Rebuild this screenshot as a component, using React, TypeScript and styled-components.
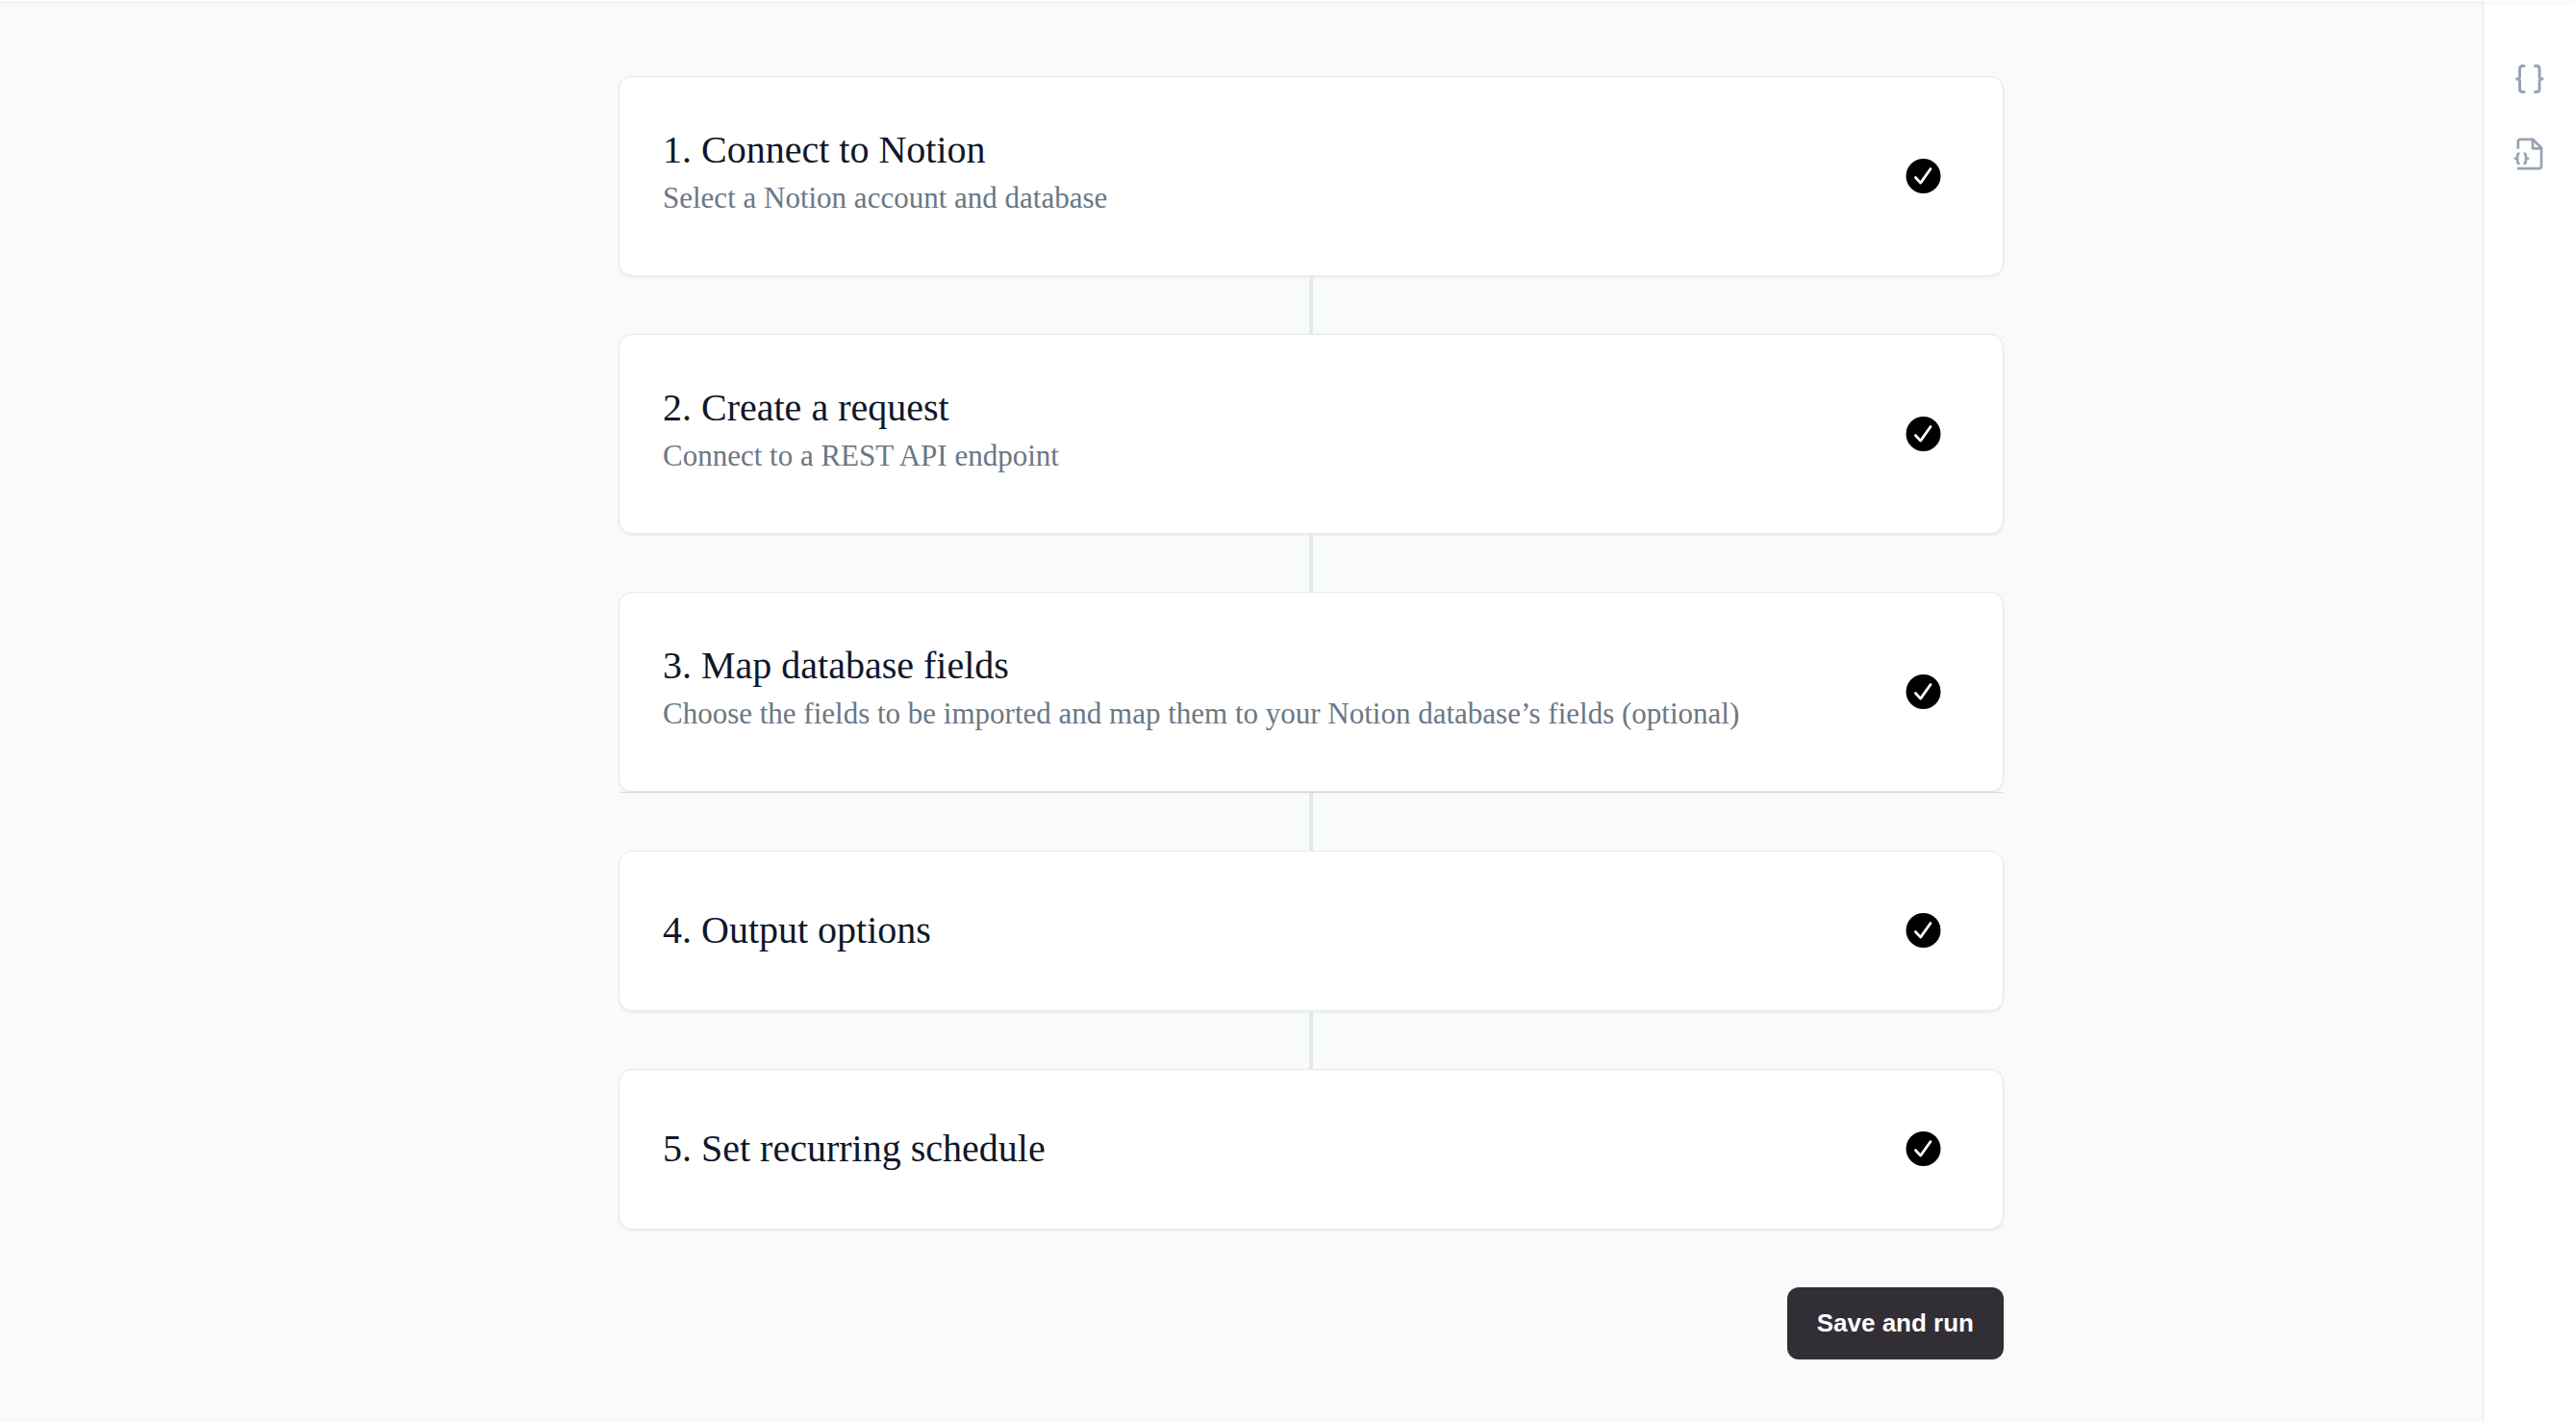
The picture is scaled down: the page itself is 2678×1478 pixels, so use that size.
import React from "react";
import styled, { createGlobalStyle } from "styled-components";

const GlobalStyle = createGlobalStyle`
  *, *::before, *::after { box-sizing: border-box; }
  body {
    margin: 0;
    background: #f9fbfa;
    color: #0f172a;
    font-family: "Liberation Serif", "Times New Roman", serif;
  }
`;

const Page = styled.div`
  display: flex;
  min-height: 100vh;
  border-top: 1px solid #ffffff;
  box-shadow: inset 0 8px 8px -8px rgba(15, 23, 42, 0.06);
`;

const Content = styled.main`
  flex: 1;
  min-width: 0;
  padding: 78px 0 64px 145px;
`;

const Column = styled.div`
  width: 100%;
  max-width: 1440px;
  margin: 0 auto;
  display: flex;
  flex-direction: column;
`;

const StepList = styled.ol`
  list-style: none;
  margin: 0;
  padding: 0;
`;

const Step = styled.li`
  & + &::before {
    content: "";
    display: block;
    width: 4px;
    height: 60px;
    margin: 0 auto;
    background: #e2e8f0;
  }
`;

const Card = styled.section<{ $compact: boolean }>`
  display: flex;
  align-items: center;
  justify-content: space-between;
  min-height: ${(p) => (p.$compact ? 167 : 208)}px;
  padding: 0 64px 0 45px;
  background: #ffffff;
  border: 1px solid #e2e8f0;
  border-radius: 14px;
  box-shadow: 0 2px 3px rgba(15, 23, 42, 0.05);
`;

const Divided = styled.div<{ $line: boolean }>`
  border-bottom: ${(p) => (p.$line ? "1px solid #dbe2ea" : "0")};
`;

const Heading = styled.div<{ $compact: boolean }>`
  padding-bottom: ${(p) => (p.$compact ? 2 : 10)}px;
`;

const Title = styled.h2`
  margin: 0;
  font-size: 40px;
  line-height: 56px;
  font-weight: 400;
`;

const Subtitle = styled.p`
  margin: 0;
  font-size: 31px;
  line-height: 44px;
  color: #6b7785;
`;

const Badge = styled.svg`
  display: block;
  flex: none;
  width: 37px;
  height: 37px;
`;

const Actions = styled.div`
  display: flex;
  justify-content: flex-end;
  margin-top: 60px;
`;

const PrimaryButton = styled.button`
  height: 75px;
  padding: 0 31px 2px;
  border: 0;
  border-radius: 12px;
  background: #322e36;
  color: #ffffff;
  font: 700 26px/36px "Liberation Sans", Arial, sans-serif;
  cursor: pointer;
`;

const Rail = styled.aside`
  flex: none;
  width: 97px;
  display: flex;
  flex-direction: column;
  align-items: center;
  gap: 42px;
  padding-top: 63px;
  background: #ffffff;
  border-left: 1px solid #e2e8f0;
  box-shadow: inset 0 8px 8px -8px rgba(15, 23, 42, 0.06);
`;

const RailButton = styled.button`
  display: block;
  width: 36px;
  height: 36px;
  padding: 0;
  border: 0;
  background: none;
  color: #98a4b3;
  cursor: pointer;

  svg { display: block; }
`;

const steps = [
  { title: "1. Connect to Notion", subtitle: "Select a Notion account and database" },
  { title: "2. Create a request", subtitle: "Connect to a REST API endpoint" },
  {
    title: "3. Map database fields",
    subtitle: "Choose the fields to be imported and map them to your Notion database’s fields (optional)",
    divided: true,
  },
  { title: "4. Output options" },
  { title: "5. Set recurring schedule" },
];

const CheckBadge = () => (
  <Badge viewBox="0 0 37 37" role="img" aria-label="Completed">
    <circle cx="18.5" cy="18" r="18" fill="#000" />
    <path d="M10.4 19.500l5.2 5.600L26 10.500" fill="none" stroke="#fff" strokeWidth="2.700" strokeLinecap="round" strokeLinejoin="round" />
  </Badge>
);

const BracesIcon = () => (
  <svg width="36" height="36" viewBox="0 0 36 36" fill="none" stroke="currentColor" strokeWidth="3" strokeLinecap="round" strokeLinejoin="round">
    <path d="M12 4.500h-1.500q-3 0-3 3v8q0 2.500-3 2.500q3 0 3 2.500v8q0 3 3 3H12" />
    <path d="M23.500 4.500h1.500q3 0 3 3v8q0 2.500 3 2.500q-3 0-3 2.500v8q0 3-3 3h-1.500" />
  </svg>
);

const FileBracesIcon = () => (
  <svg width="36" height="36" viewBox="0 0 36 36" fill="none" stroke="currentColor" strokeWidth="2.700" strokeLinejoin="round">
    <path d="M5.800 12.800V5.500q0-2.700 2.700-2.700H21l9 9V30.500q0 2.700-2.700 2.700H5" />
    <path d="M21 2.800v9.500h9" />
    <path d="M7.500 17.500q-2.300 0-2.300 2v1.500q0 1.700-2.200 1.700q2.200 0 2.200 1.700v1.500q0 2 2.300 2" />
    <path d="M11.500 17.500q2.300 0 2.300 2v1.500q0 1.700 2.200 1.700q-2.200 0-2.200 1.700v1.500q0 2-2.300 2" />
  </svg>
);

export default function App() {
  return (
    <>
      <GlobalStyle />
      <Page>
        <Content>
          <Column>
            <StepList>
              {steps.map((step) => (
                <Step key={step.title}>
                  <Divided $line={!!step.divided}>
                    <Card $compact={!step.subtitle}>
                      <Heading $compact={!step.subtitle}>
                        <Title>{step.title}</Title>
                        {step.subtitle && <Subtitle>{step.subtitle}</Subtitle>}
                      </Heading>
                      <CheckBadge />
                    </Card>
                  </Divided>
                </Step>
              ))}
            </StepList>
            <Actions>
              <PrimaryButton type="button">Save and run</PrimaryButton>
            </Actions>
          </Column>
        </Content>
        <Rail>
          <RailButton type="button" aria-label="View JSON"><BracesIcon /></RailButton>
          <RailButton type="button" aria-label="View response file"><FileBracesIcon /></RailButton>
        </Rail>
      </Page>
    </>
  );
}
